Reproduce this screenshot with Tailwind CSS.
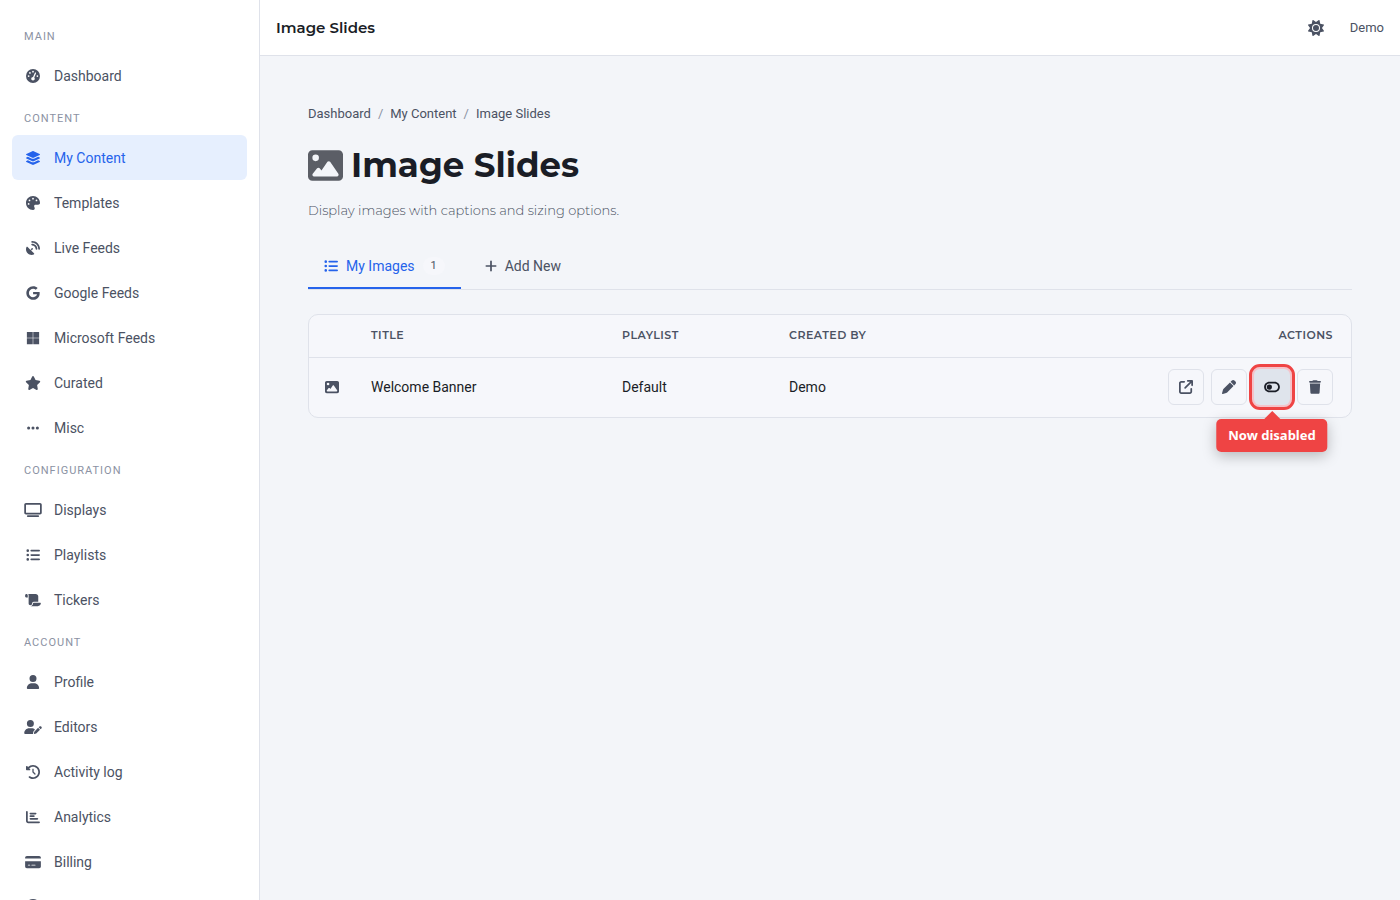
<!DOCTYPE html>
<html lang="en">
  <head>
    <title>Image Slides</title>
    <meta charset="utf-8" />
    <meta name="viewport" content="width=device-width, initial-scale=1" />
    <script src="https://cdn.jsdelivr.net/npm/@tailwindcss/browser@4"></script>
  </head>
  <body class="flex h-screen overflow-hidden bg-[#f3f5f9] font-['Roboto','Liberation_Sans',sans-serif] text-[#1a1d26]">
    <!-- icons -->
    <svg class="hidden">
      <symbol id="gauge" viewBox="0 0 512 512"><path d="M0 256a256 256 0 1 1 512 0A256 256 0 1 1 0 256zM288 96a32 32 0 1 0 -64 0 32 32 0 1 0 64 0zM256 416c35.3 0 64-28.7 64-64c0-17.4-6.9-33.1-18.1-44.6L366 161.7c5.3-12.1-.2-26.3-12.3-31.6s-26.3 .2-31.6 12.3L257.9 288c-.6 0-1.3 0-1.9 0c-35.3 0-64 28.7-64 64s28.7 64 64 64zM176 144a32 32 0 1 0 -64 0 32 32 0 1 0 64 0zM96 288a32 32 0 1 0 0-64 32 32 0 1 0 0 64zm352-32a32 32 0 1 0 -64 0 32 32 0 1 0 64 0z" /></symbol>
      <symbol id="layers" viewBox="0 0 576 512"><path d="M264.5 5.2c14.9-6.9 32.1-6.9 47 0l218.6 101c8.5 3.9 13.9 12.4 13.9 21.8s-5.4 17.9-13.9 21.8l-218.6 101c-14.9 6.9-32.1 6.9-47 0L45.9 149.8C37.4 145.8 32 137.3 32 128s5.4-17.9 13.9-21.8L264.5 5.2zM476.9 209.6l53.2 24.6c8.5 3.9 13.9 12.4 13.9 21.8s-5.4 17.9-13.9 21.8l-218.6 101c-14.9 6.9-32.1 6.9-47 0L45.9 277.8C37.4 273.8 32 265.3 32 256s5.4-17.9 13.9-21.8l53.2-24.6 152 70.2c23.4 10.8 50.4 10.8 73.8 0l152-70.2zm-152 198.2l152-70.2 53.2 24.6c8.5 3.9 13.9 12.4 13.9 21.8s-5.4 17.9-13.9 21.8l-218.6 101c-14.9 6.9-32.1 6.9-47 0L45.9 405.8C37.4 401.8 32 393.3 32 384s5.4-17.9 13.9-21.8l53.2-24.6 152 70.2c23.4 10.8 50.4 10.8 73.8 0z" /></symbol>
      <symbol id="palette" viewBox="0 0 512 512"><path d="M512 256c0 .9 0 1.8 0 2.7c-.4 36.5-33.6 61.3-70.1 61.3L344 320c-26.5 0-48 21.5-48 48c0 3.4 .4 6.7 1 9.9c2.1 10.2 6.5 20 10.8 29.9c6.1 13.8 12.1 27.5 12.1 42c0 31.8-21.6 60.7-53.4 62c-3.5 .1-7 .2-10.6 .2C114.6 512 0 397.4 0 256S114.6 0 256 0S512 114.6 512 256zM128 288a32 32 0 1 0 -64 0 32 32 0 1 0 64 0zm0-96a32 32 0 1 0 0-64 32 32 0 1 0 0 64zM288 96a32 32 0 1 0 -64 0 32 32 0 1 0 64 0zm96 96a32 32 0 1 0 0-64 32 32 0 1 0 0 64z" /></symbol>
      <symbol id="dish" viewBox="0 0 512 512"><path d="M192 32c0-17.7 14.3-32 32-32C383.1 0 512 128.9 512 288c0 17.7-14.3 32-32 32s-32-14.3-32-32C448 164.3 347.7 64 224 64c-17.7 0-32-14.3-32-32zM60.6 220.6L164.7 324.7l28.4-28.4c-.7-2.6-1.1-5.4-1.1-8.3c0-17.7 14.3-32 32-32s32 14.3 32 32s-14.3 32-32 32c-2.9 0-5.6-.4-8.3-1.1l-28.4 28.4L291.4 451.4c14.5 14.5 11.8 38.8-7.3 46.3C260.5 506.9 234.9 512 208 512C93.1 512 0 418.9 0 304c0-26.9 5.1-52.5 14.4-76.1c7.5-19 31.8-21.8 46.3-7.3zM224 96c106 0 192 86 192 192c0 17.7-14.3 32-32 32s-32-14.3-32-32c0-70.7-57.3-128-128-128c-17.7 0-32-14.3-32-32s14.3-32 32-32z" /></symbol>
      <symbol id="google" viewBox="0 0 488 512"><path d="M488 261.8C488 403.3 391.1 504 248 504 110.8 504 0 393.2 0 256S110.8 8 248 8c66.8 0 123 24.5 166.3 64.9l-67.5 64.9C258.5 52.6 94.3 116.6 94.3 256c0 86.5 69.1 156.6 153.7 156.6 98.2 0 135-70.4 140.8-106.9H248v-85.3h236.1c2.3 12.7 3.9 24.9 3.9 41.4z" /></symbol>
      <symbol id="microsoft" viewBox="0 0 448 512"><path d="M0 32h214.6v214.6H0V32zm233.4 0H448v214.6H233.4V32zM0 265.4h214.6V480H0V265.4zm233.4 0H448V480H233.4V265.4z" /></symbol>
      <symbol id="star" viewBox="0 0 576 512"><path d="M316.9 18C311.6 7 300.4 0 288.1 0s-23.4 7-28.8 18L195 150.3 51.4 171.5c-12 1.8-22 10.2-25.7 21.7s-.7 24.2 7.9 32.7L137.8 329 113.2 474.7c-2 12 3 24.2 12.9 31.3s23 8 33.8 2.3l128.3-68.5 128.3 68.5c10.8 5.7 23.9 4.9 33.8-2.3s14.9-19.3 12.9-31.3L438.5 329 542.7 225.9c8.6-8.5 11.7-21.2 7.9-32.7s-13.7-19.9-25.7-21.7L381.2 150.3 316.9 18z" /></symbol>
      <symbol id="ellipsis" viewBox="0 0 448 512"><path d="M8 256a56 56 0 1 1 112 0A56 56 0 1 1 8 256zm160 0a56 56 0 1 1 112 0 56 56 0 1 1 -112 0zm216-56a56 56 0 1 1 0 112 56 56 0 1 1 0-112z" /></symbol>
      <symbol id="tv" viewBox="0 0 640 512"><path d="M64 64V352H576V64H64zM0 64C0 28.7 28.7 0 64 0H576c35.3 0 64 28.7 64 64V352c0 35.3-28.7 64-64 64H64c-35.3 0-64-28.7-64-64V64zM128 448H512c17.7 0 32 14.3 32 32s-14.3 32-32 32H128c-17.7 0-32-14.3-32-32s14.3-32 32-32z" /></symbol>
      <symbol id="list" viewBox="0 0 512 512"><path d="M64 144a48 48 0 1 0 0-96 48 48 0 1 0 0 96zM192 64c-17.7 0-32 14.3-32 32s14.3 32 32 32H480c17.7 0 32-14.3 32-32s-14.3-32-32-32H192zm0 160c-17.7 0-32 14.3-32 32s14.3 32 32 32H480c17.7 0 32-14.3 32-32s-14.3-32-32-32H192zm0 160c-17.7 0-32 14.3-32 32s14.3 32 32 32H480c17.7 0 32-14.3 32-32s-14.3-32-32-32H192zM64 464a48 48 0 1 0 0-96 48 48 0 1 0 0 96zm48-208a48 48 0 1 0 -96 0 48 48 0 1 0 96 0z" /></symbol>
      <symbol id="scroll" viewBox="0 0 576 512"><path d="M0 80v48c0 17.7 14.3 32 32 32H48 96V80c0-26.5-21.5-48-48-48S0 53.5 0 80zM112 32c10 13.4 16 30 16 48V384c0 35.3 28.7 64 64 64s64-28.7 64-64v-5.3c0-32.4 26.3-58.7 58.7-58.7H480V128c0-53-43-96-96-96H112zM464 480c61.9 0 112-50.1 112-112c0-8.8-7.2-16-16-16H314.7c-14.7 0-26.7 11.9-26.7 26.7V384c0 53-43 96-96 96H368h96z" /></symbol>
      <symbol id="user" viewBox="0 0 448 512"><path d="M224 256A128 128 0 1 0 224 0a128 128 0 1 0 0 256zm-45.7 48C79.8 304 0 383.8 0 482.3C0 498.7 13.3 512 29.7 512H418.3c16.4 0 29.7-13.3 29.7-29.7C448 383.8 368.2 304 269.7 304H178.3z" /></symbol>
      <symbol id="user-pen" viewBox="0 0 640 512"><path d="M224 256A128 128 0 1 0 224 0a128 128 0 1 0 0 256zm-45.7 48C79.8 304 0 383.8 0 482.3C0 498.7 13.3 512 29.7 512H322.8c-3.1-8.8-3.7-18.4-1.4-27.8l15-60.1c2.8-11.3 8.6-21.5 16.8-29.7l40.3-40.3c-32.1-31-75.7-50.1-123.9-50.1H178.3zm435.5-68.3c-15.6-15.6-40.9-15.6-56.6 0l-29.4 29.4 71 71 29.4-29.4c15.6-15.6 15.6-40.9 0-56.6l-14.4-14.4zM375.9 417c-4.1 4.1-7 9.2-8.4 14.9l-15 60.1c-1.4 5.5 .2 11.2 4.2 15.2s9.7 5.6 15.2 4.2l60.1-15c5.6-1.4 10.8-4.3 14.9-8.4L576.1 358.7l-71-71L375.9 417z" /></symbol>
      <symbol id="history" viewBox="0 0 512 512"><path d="M75 75L41 41C25.9 25.9 0 36.6 0 57.9V168c0 13.3 10.7 24 24 24H134.1c21.4 0 32.1-25.9 17-41l-30.8-30.8C155 85.5 203 64 256 64c106 0 192 86 192 192s-86 192-192 192c-40.8 0-78.6-12.7-109.7-34.4c-14.5-10.1-34.4-6.6-44.6 7.9s-6.6 34.4 7.9 44.6C151.2 495 201.7 512 256 512c141.4 0 256-114.6 256-256S397.4 0 256 0C185.3 0 121.3 28.7 75 75zm181 53c-13.3 0-24 10.7-24 24V256c0 6.4 2.5 12.5 7 17l72 72c9.4 9.4 24.6 9.4 33.9 0s9.4-24.6 0-33.9l-65-65V152c0-13.3-10.7-24-24-24z" /></symbol>
      <symbol id="chart" viewBox="0 0 512 512"><path d="M32 32c17.7 0 32 14.3 32 32V400c0 8.8 7.2 16 16 16H480c17.7 0 32 14.3 32 32s-14.3 32-32 32H80c-44.2 0-80-35.8-80-80V64C0 46.3 14.3 32 32 32zm96 96c0-17.7 14.3-32 32-32l192 0c17.7 0 32 14.3 32 32s-14.3 32-32 32H160c-17.7 0-32-14.3-32-32zm32 64H288c17.7 0 32 14.3 32 32s-14.3 32-32 32H160c-17.7 0-32-14.3-32-32s14.3-32 32-32zm0 96H416c17.7 0 32 14.3 32 32s-14.3 32-32 32H160c-17.7 0-32-14.3-32-32s14.3-32 32-32z" /></symbol>
      <symbol id="card" viewBox="0 0 576 512"><path d="M64 32C28.7 32 0 60.7 0 96v32H576V96c0-35.3-28.7-64-64-64H64zM576 224H0V416c0 35.3 28.7 64 64 64H512c35.3 0 64-28.7 64-64V224zM112 352h64c8.8 0 16 7.2 16 16s-7.2 16-16 16H112c-8.8 0-16-7.2-16-16s7.2-16 16-16zm112 16c0-8.8 7.2-16 16-16H368c8.8 0 16 7.2 16 16s-7.2 16-16 16H240c-8.8 0-16-7.2-16-16z" /></symbol>
      <symbol id="help" viewBox="0 0 512 512"><circle cx="256" cy="256" r="256" /></symbol>
      <symbol id="image" viewBox="0 0 512 512"><path d="M0 96C0 60.7 28.7 32 64 32H448c35.3 0 64 28.7 64 64V416c0 35.3-28.7 64-64 64H64c-35.3 0-64-28.7-64-64V96zM323.8 202.5c-4.5-6.6-11.9-10.5-19.8-10.5s-15.4 3.9-19.8 10.5l-87 127.6L170.7 297c-4.6-5.7-11.5-9-18.7-9s-14.2 3.3-18.7 9l-64 80c-5.8 7.2-6.9 17.1-2.9 25.4s12.4 13.6 21.6 13.6h96 32H424c8.9 0 17.1-4.9 21.2-12.8s3.6-17.4-1.4-24.7l-120-176zM112 192a48 48 0 1 0 0-96 48 48 0 1 0 0 96z" /></symbol>
      <symbol id="plus" viewBox="0 0 448 512"><path d="M256 80c0-17.7-14.3-32-32-32s-32 14.3-32 32V224H48c-17.7 0-32 14.3-32 32s14.3 32 32 32H192V432c0 17.7 14.3 32 32 32s32-14.3 32-32V288H400c17.7 0 32-14.3 32-32s-14.3-32-32-32H256V80z" /></symbol>
      <symbol id="open" viewBox="0 0 512 512"><path d="M320 0c-17.7 0-32 14.3-32 32s14.3 32 32 32h82.7L201.4 265.4c-12.5 12.5-12.5 32.8 0 45.3s32.8 12.5 45.3 0L448 109.3V192c0 17.7 14.3 32 32 32s32-14.3 32-32V32c0-17.7-14.3-32-32-32H320zM80 32C35.8 32 0 67.8 0 112V432c0 44.2 35.8 80 80 80H400c44.2 0 80-35.8 80-80V320c0-17.7-14.3-32-32-32s-32 14.3-32 32V432c0 8.8-7.2 16-16 16H80c-8.8 0-16-7.2-16-16V112c0-8.8 7.2-16 16-16H192c17.7 0 32-14.3 32-32s-14.3-32-32-32H80z" /></symbol>
      <symbol id="pen" viewBox="0 0 512 512"><path d="M362.7 19.3L314.3 67.7 444.3 197.7l48.4-48.4c25-25 25-65.5 0-90.5L453.3 19.3c-25-25-65.5-25-90.5 0zm-71 71L58.6 323.5c-10.4 10.4-18 23.3-22.2 37.4L1 481.2C-1.5 489.7 .8 498.8 7 505s15.3 8.5 23.7 6.1l120.3-35.4c14.1-4.2 27-11.8 37.4-22.2L421.7 220.3 291.7 90.3z" /></symbol>
      <symbol id="toggle-off" viewBox="0 0 576 512"><path d="M384 128c70.7 0 128 57.3 128 128s-57.3 128-128 128H192c-70.7 0-128-57.3-128-128s57.3-128 128-128H384zM576 256c0-106-86-192-192-192H192C86 64 0 150 0 256S86 448 192 448H384c106 0 192-86 192-192zM192 352a96 96 0 1 0 0-192 96 96 0 1 0 0 192z" /></symbol>
      <symbol id="trash" viewBox="0 0 448 512"><path d="M135.2 17.7L128 32H32C14.3 32 0 46.3 0 64S14.3 96 32 96H416c17.7 0 32-14.3 32-32s-14.3-32-32-32H320l-7.2-14.3C307.4 6.8 296.3 0 284.2 0H163.8c-12.1 0-23.2 6.8-28.6 17.7zM416 128H32L53.2 467c1.6 25.3 22.6 45 47.9 45H346.9c25.3 0 46.3-19.7 47.9-45L416 128z" /></symbol>
      <symbol id="sun" viewBox="0 0 512 512"><path d="M361.5 1.2c5 2.1 8.6 6.6 9.6 11.9L391 121l107.9 19.8c5.3 1 9.8 4.6 11.9 9.6s1.5 10.7-1.6 15.2L446.9 256l62.3 90.3c3.1 4.5 3.7 10.2 1.6 15.2s-6.6 8.6-11.9 9.6L391 391 371.1 498.9c-1 5.3-4.6 9.8-9.6 11.9s-10.7 1.5-15.2-1.6L256 446.9l-90.3 62.3c-4.5 3.1-10.2 3.7-15.2 1.6s-8.6-6.6-9.6-11.9L121 391 13.1 371.1c-5.3-1-9.8-4.6-11.9-9.6s-1.5-10.7 1.6-15.2L65.1 256 2.8 165.7c-3.1-4.5-3.7-10.2-1.6-15.2s6.6-8.6 11.9-9.6L121 121 140.9 13.1c1-5.3 4.6-9.8 9.6-11.9s10.7-1.5 15.2 1.6L256 65.1 346.3 2.8c4.5-3.1 10.2-3.7 15.2-1.6zM160 256a96 96 0 1 1 192 0 96 96 0 1 1 -192 0zm224 0a128 128 0 1 0 -256 0 128 128 0 1 0 256 0z" /></symbol>
    </svg>

    <!-- sidebar -->
    <nav class="w-[260px] shrink-0 overflow-hidden border-r border-[#dfe2ea] bg-white px-3 pt-4 text-sm text-[#4b5263]">
      <h2 class="px-3 pt-3 pb-2 text-[11px] leading-[17px] tracking-[1px] text-[#8b92a3]">MAIN</h2>
      <a href="#" class="flex h-[45px] items-center gap-3 rounded-md px-3"><svg class="h-3.5 w-[18px] fill-current"><use href="#gauge" /></svg>Dashboard</a>

      <h2 class="px-3 pt-3 pb-2 text-[11px] leading-[17px] tracking-[1px] text-[#8b92a3]">CONTENT</h2>
      <a href="#" class="flex h-[45px] items-center gap-3 rounded-md bg-[#e6effe] px-3 text-[#2563eb]"><svg class="h-3.5 w-[18px] fill-current"><use href="#layers" /></svg>My Content</a>
      <a href="#" class="flex h-[45px] items-center gap-3 rounded-md px-3"><svg class="h-3.5 w-[18px] fill-current"><use href="#palette" /></svg>Templates</a>
      <a href="#" class="flex h-[45px] items-center gap-3 rounded-md px-3"><svg class="h-3.5 w-[18px] fill-current"><use href="#dish" /></svg>Live Feeds</a>
      <a href="#" class="flex h-[45px] items-center gap-3 rounded-md px-3"><svg class="h-3.5 w-[18px] fill-current"><use href="#google" /></svg>Google Feeds</a>
      <a href="#" class="flex h-[45px] items-center gap-3 rounded-md px-3"><svg class="h-3.5 w-[18px] fill-current"><use href="#microsoft" /></svg>Microsoft Feeds</a>
      <a href="#" class="flex h-[45px] items-center gap-3 rounded-md px-3"><svg class="h-3.5 w-[18px] fill-current"><use href="#star" /></svg>Curated</a>
      <a href="#" class="flex h-[45px] items-center gap-3 rounded-md px-3"><svg class="h-3.5 w-[18px] fill-current"><use href="#ellipsis" /></svg>Misc</a>

      <h2 class="px-3 pt-3 pb-2 text-[11px] leading-[17px] tracking-[1px] text-[#8b92a3]">CONFIGURATION</h2>
      <a href="#" class="flex h-[45px] items-center gap-3 rounded-md px-3"><svg class="h-3.5 w-[18px] fill-current"><use href="#tv" /></svg>Displays</a>
      <a href="#" class="flex h-[45px] items-center gap-3 rounded-md px-3"><svg class="h-3.5 w-[18px] fill-current"><use href="#list" /></svg>Playlists</a>
      <a href="#" class="flex h-[45px] items-center gap-3 rounded-md px-3"><svg class="h-3.5 w-[18px] fill-current"><use href="#scroll" /></svg>Tickers</a>

      <h2 class="px-3 pt-3 pb-2 text-[11px] leading-[17px] tracking-[1px] text-[#8b92a3]">ACCOUNT</h2>
      <a href="#" class="flex h-[45px] items-center gap-3 rounded-md px-3"><svg class="h-3.5 w-[18px] fill-current"><use href="#user" /></svg>Profile</a>
      <a href="#" class="flex h-[45px] items-center gap-3 rounded-md px-3"><svg class="h-3.5 w-[18px] fill-current"><use href="#user-pen" /></svg>Editors</a>
      <a href="#" class="flex h-[45px] items-center gap-3 rounded-md px-3"><svg class="h-3.5 w-[18px] fill-current"><use href="#history" /></svg>Activity log</a>
      <a href="#" class="flex h-[45px] items-center gap-3 rounded-md px-3"><svg class="h-3.5 w-[18px] fill-current"><use href="#chart" /></svg>Analytics</a>
      <a href="#" class="flex h-[45px] items-center gap-3 rounded-md px-3"><svg class="h-3.5 w-[18px] fill-current"><use href="#card" /></svg>Billing</a>
      <a href="#" aria-label="Help" class="flex h-[45px] items-center gap-3 rounded-md px-3"><svg class="h-4 w-[18px] fill-current"><use href="#help" /></svg></a>
    </nav>

    <div class="flex min-w-0 flex-1 flex-col">
      <!-- top bar -->
      <header class="flex h-14 shrink-0 items-center justify-between border-b border-[#dfe2ea] bg-white px-4">
        <div class="font-['Montserrat','Inter',sans-serif] text-[15px] leading-6 font-semibold">Image Slides</div>
        <div class="flex items-center gap-[26px] text-[13px] text-[#4b5263]">
          <button type="button" aria-label="Toggle theme"><svg class="size-4 fill-current"><use href="#sun" /></svg></button>
          <a href="#">Demo</a>
        </div>
      </header>

      <main class="flex-1 p-12">
        <div class="flex gap-[7px] text-[13px] leading-5 text-[#4b5263]">
          <a href="#">Dashboard</a>
          <span class="text-[#8b92a3]">/</span>
          <a href="#">My Content</a>
          <span class="text-[#8b92a3]">/</span>
          <span>Image Slides</span>
        </div>

        <h1 class="mt-5 flex items-center gap-2 font-['Montserrat','Inter',sans-serif] text-[34px] leading-[43px] font-bold">
          <svg class="size-[35px] fill-[#5b5e66]"><use href="#image" /></svg>Image Slides
        </h1>
        <p class="mt-[13px] font-['Montserrat','Inter',sans-serif] text-[13px] leading-5 font-light text-[#4b5263]">Display images with captions and sizing options.</p>

        <!-- tabs -->
        <div class="mt-6 flex border-b border-[#dfe2ea] text-sm text-[#4b5263]">
          <button type="button" class="flex h-[45px] items-center gap-2 border-b-2 border-[#2563eb] px-4 text-[#2563eb]">
            <svg class="size-3.5 fill-current"><use href="#list" /></svg>My Images
            <span class="rounded-full bg-[#f6f7fb] px-2 text-[11px] leading-[18px] text-[#4b5263]">1</span>
          </button>
          <button type="button" class="flex h-[45px] items-center gap-2 border-b-2 border-transparent px-6">
            <svg class="h-3.5 w-3 fill-current"><use href="#plus" /></svg>Add New
          </button>
        </div>

        <!-- slides table -->
        <div class="mt-6 rounded-[10px] border border-[#dfe2ea] bg-[#f6f7fb]">
          <table class="w-full table-fixed text-left text-sm">
            <thead>
              <tr class="h-[42px] border-b border-[#dfe2ea] font-['Montserrat','Inter',sans-serif] text-[11px] text-[#4b5263]">
                <th class="w-[46px]"></th>
                <th class="w-[251px] px-4 font-semibold tracking-[0.5px]">TITLE</th>
                <th class="w-[167px] px-4 font-semibold tracking-[0.5px]">PLAYLIST</th>
                <th class="px-4 font-semibold tracking-[0.5px]">CREATED BY</th>
                <th class="w-[240px] pr-[18px] text-right font-semibold tracking-[0.5px]">ACTIONS</th>
              </tr>
            </thead>
            <tbody>
              <tr class="h-[60px]">
                <td class="pl-4"><svg class="size-3.5 fill-[#4b5263]"><use href="#image" /></svg></td>
                <td class="px-4">Welcome Banner</td>
                <td class="px-4">Default</td>
                <td class="px-4">Demo</td>
                <td class="pr-[18px]">
                  <div class="flex justify-end gap-[7px] text-[#4b5263]">
                    <button type="button" aria-label="Preview" class="flex size-9 items-center justify-center rounded-md border border-[#dfe2ea]"><svg class="size-3.5 fill-current"><use href="#open" /></svg></button>
                    <button type="button" aria-label="Edit" class="flex size-9 items-center justify-center rounded-md border border-[#dfe2ea]"><svg class="size-3.5 fill-current"><use href="#pen" /></svg></button>
                    <div class="relative">
                      <button type="button" aria-label="Enable" class="flex size-9 items-center justify-center rounded-md bg-[#dfe4ec] text-[#1a1d26] ring-2 ring-[#f4c3ca] outline-3 outline-offset-2 outline-[#ef4444]"><svg class="h-3.5 w-4 fill-current"><use href="#toggle-off" /></svg></button>
                      <div class="absolute top-[50px] left-1/2 -translate-x-1/2 rounded-[5px] bg-[#ef4444] px-3 font-['Noto_Sans',sans-serif] text-[13px] leading-[33px] font-bold whitespace-nowrap text-white shadow-[0_4px_14px_rgba(0,0,0,0.25)]">
                        <span class="absolute bottom-full left-1/2 -translate-x-1/2 border-x-8 border-b-8 border-x-transparent border-b-[#ef4444]"></span>
                        Now disabled
                      </div>
                    </div>
                    <button type="button" aria-label="Delete" class="flex size-9 items-center justify-center rounded-md border border-[#dfe2ea]"><svg class="h-3.5 w-3 fill-current"><use href="#trash" /></svg></button>
                  </div>
                </td>
              </tr>
            </tbody>
          </table>
        </div>
      </main>
    </div>
  </body>
</html>
